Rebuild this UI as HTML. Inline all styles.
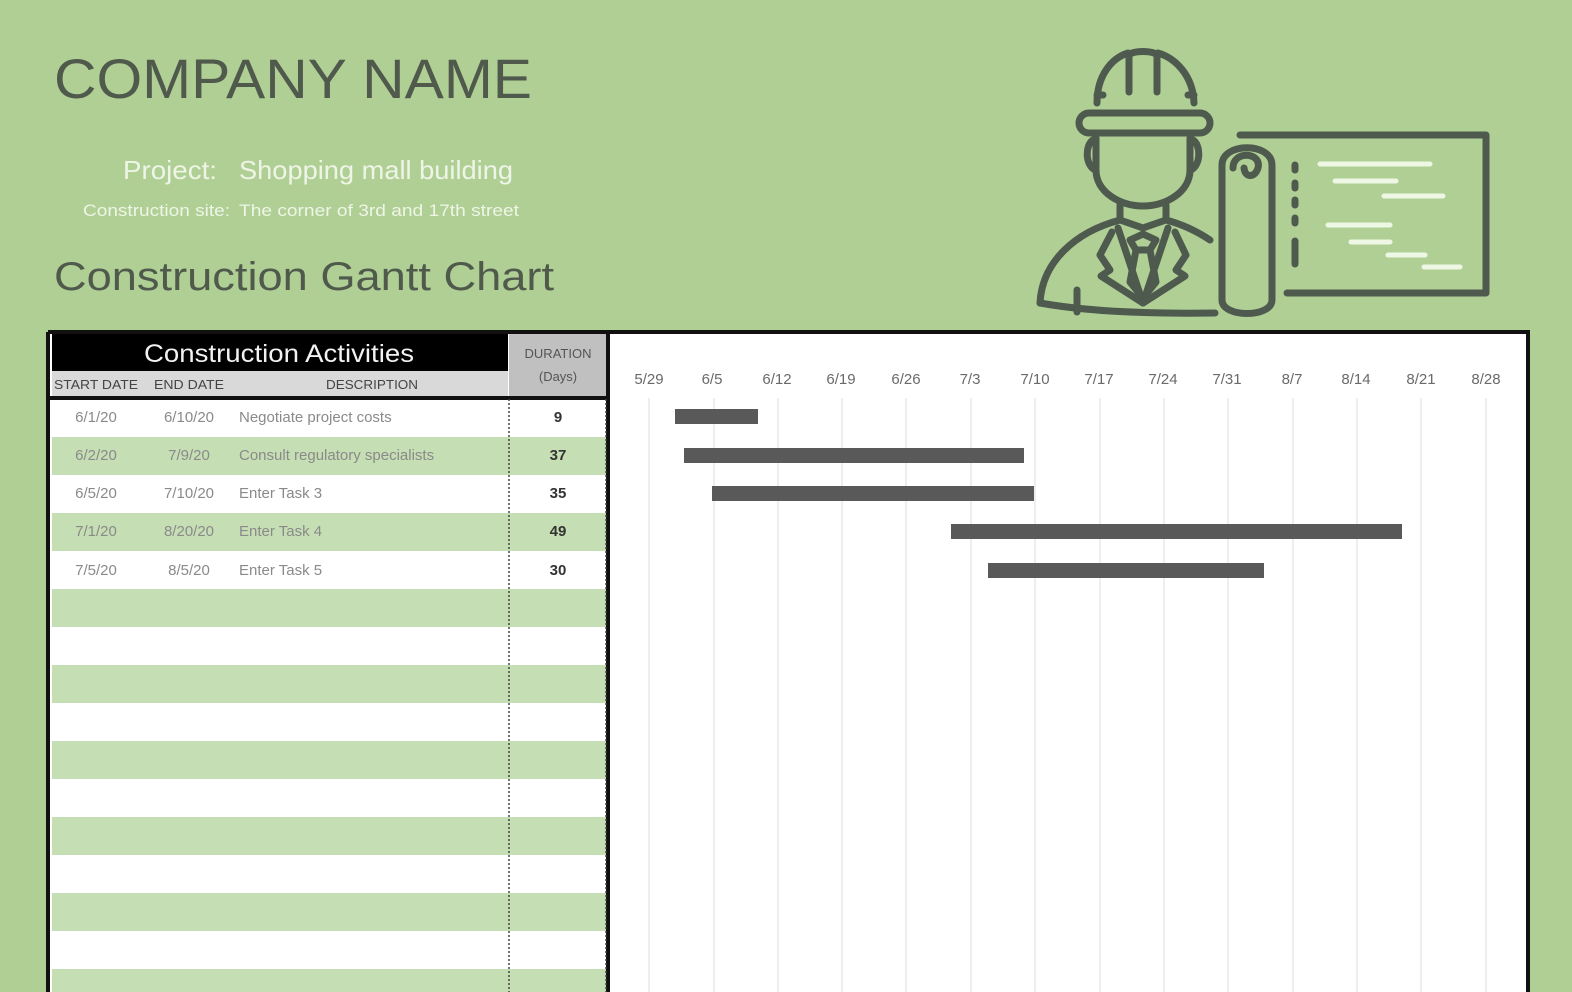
<!DOCTYPE html>
<html><head><meta charset="utf-8"><style>
html,body{margin:0;padding:0;background:#b0cf95;}
svg{display:block}
text{font-family:"Liberation Sans",sans-serif}
</style></head><body>
<svg width="1572" height="992" viewBox="0 0 1572 992" xmlns="http://www.w3.org/2000/svg">
<rect x="0" y="0" width="1572" height="992" fill="#b0cf95"/>
<text x="54" y="98" font-size="56" fill="#505a4c" textLength="478" lengthAdjust="spacingAndGlyphs">COMPANY NAME</text>
<text x="123" y="179" font-size="26" fill="#eef5e6" textLength="94" lengthAdjust="spacingAndGlyphs">Project:</text>
<text x="239" y="179" font-size="26" fill="#eef5e6" textLength="274" lengthAdjust="spacingAndGlyphs">Shopping mall building</text>
<text x="83" y="216" font-size="17" fill="#eef5e6" textLength="147" lengthAdjust="spacingAndGlyphs">Construction site:</text>
<text x="239" y="216" font-size="17" fill="#eef5e6" textLength="280" lengthAdjust="spacingAndGlyphs">The corner of 3rd and 17th street</text>
<text x="54" y="290" font-size="40" fill="#505a4c" textLength="500" lengthAdjust="spacingAndGlyphs">Construction Gantt Chart</text>

<g fill="none" stroke="#4f5a4f" stroke-width="7" stroke-linecap="round" stroke-linejoin="round">
<path d="M1097 103 C1097 75 1112 58 1128 53 M1158 53 C1175 58 1193 75 1194 103"/>
<path d="M1129 92 V56 C1129 50 1157 50 1157 56 V92"/>
<path d="M1097 95 H1103 M1188 95 H1194"/>
<rect x="1079" y="113" width="131" height="20" rx="10"/>
<path d="M1093 140 C1085 145 1085 165 1095 170 M1193 140 C1201 145 1201 165 1191 170"/>
<path d="M1096 138 V170 C1096 192 1120 206 1143 206 C1166 206 1190 192 1190 170 V138"/>
<path d="M1120 205 V220 M1166 205 V220"/>
<path d="M1040 303 C1042 262 1075 232 1120 220 L1143 228 L1166 220 C1185 225 1198 232 1210 240"/>
<path d="M1040 303 C1090 312 1150 314 1215 313"/>
<path d="M1118 228 L1143 303 L1168 228"/>
<path d="M1112 232 L1100 255 L1110 270 L1101 276 L1143 303 M1175 232 L1186 255 L1176 270 L1185 276 L1143 303"/>
<path d="M1130 240 L1143 234 L1156 240 L1150 250 H1136 Z M1136 250 L1130 282 L1143 298 L1156 282 L1150 250"/>
<path d="M1077 290 V312"/>
<path d="M1222 300 V165 C1222 142 1272 142 1272 165 V300 C1272 318 1222 318 1222 300 Z"/>
<path d="M1233 168 C1233 150 1262 152 1258 168 C1255 178 1245 178 1244 168"/>
<path d="M1240 135 H1486 V293 H1287"/>
<path d="M1295 165 V170 M1295 183 V188 M1295 200 V205 M1295 218 V223 M1295 241 V264"/>
</g>
<g stroke="#eef7e4" stroke-width="5" stroke-linecap="round">
<path d="M1320 164 H1430 M1335 181 H1396 M1384 196 H1443 M1328 225 H1390 M1351 242 H1390 M1388 255 H1425 M1424 267 H1460"/>
</g>

<rect x="609" y="332" width="920" height="670" fill="#ffffff"/>
<rect x="607" y="330" width="922" height="4" fill="#111"/>
<rect x="1526" y="330" width="4" height="670" fill="#111"/>
<g stroke="#e2e2e2" stroke-width="1.2">
<path d="M649 398V992M714 398V992M778 398V992M842 398V992M906 398V992M971 398V992M1035 398V992M1100 398V992M1164 398V992M1228 398V992M1293 398V992M1357 398V992M1421 398V992M1486 398V992"/>
</g>
<g font-size="15" fill="#6a6a6a" text-anchor="middle">
<text x="649" y="384">5/29</text><text x="712" y="384">6/5</text><text x="777" y="384">6/12</text>
<text x="841" y="384">6/19</text><text x="906" y="384">6/26</text><text x="970" y="384">7/3</text>
<text x="1035" y="384">7/10</text><text x="1099" y="384">7/17</text><text x="1163" y="384">7/24</text>
<text x="1227" y="384">7/31</text><text x="1292" y="384">8/7</text><text x="1356" y="384">8/14</text>
<text x="1421" y="384">8/21</text><text x="1486" y="384">8/28</text>
</g>
<g fill="#595959">
<rect x="675" y="409" width="83" height="15"/>
<rect x="684" y="448" width="340" height="15"/>
<rect x="712" y="486" width="322" height="15"/>
<rect x="951" y="524" width="451" height="15"/>
<rect x="988" y="563" width="276" height="15"/>
</g>

<rect x="48" y="332" width="560" height="670" fill="#fff"/>
<rect x="52" y="334" width="456" height="37" fill="#000"/>
<rect x="52" y="371" width="456" height="27" fill="#d9d9d9"/>
<rect x="509" y="334" width="97" height="64" fill="#c0c0c0"/>
<g fill="#c6deb3">
<rect x="52" y="437" width="554" height="38"/>
<rect x="52" y="513" width="554" height="38"/>
<rect x="52" y="589" width="554" height="38"/>
<rect x="52" y="665" width="554" height="38"/>
<rect x="52" y="741" width="554" height="38"/>
<rect x="52" y="817" width="554" height="38"/>
<rect x="52" y="893" width="554" height="38"/>
<rect x="52" y="969" width="554" height="38"/>
</g>
<path d="M48 332V992M608 332V992M48 332H608M48 398H608" stroke="#111" stroke-width="4" fill="none"/>
<path d="M509 399V992M606 399V992" stroke="#444" stroke-width="1.5" stroke-dasharray="2 2"/>
<text x="279" y="362" font-size="25" fill="#f2f2f2" text-anchor="middle" textLength="270" lengthAdjust="spacingAndGlyphs">Construction Activities</text>
<g font-size="13" fill="#444">
<text x="54" y="389" textLength="84" lengthAdjust="spacingAndGlyphs">START DATE</text>
<text x="154" y="389" textLength="70" lengthAdjust="spacingAndGlyphs">END DATE</text>
<text x="326" y="389" textLength="92" lengthAdjust="spacingAndGlyphs">DESCRIPTION</text>
</g>
<g font-size="13" fill="#555" text-anchor="middle">
<text x="558" y="358">DURATION</text>
<text x="558" y="381">(Days)</text>
</g>
<g font-size="15" fill="#8a8a8a">
<text x="96" y="422" text-anchor="middle">6/1/20</text><text x="189" y="422" text-anchor="middle">6/10/20</text><text x="239" y="422">Negotiate project costs</text>
<text x="96" y="460" text-anchor="middle">6/2/20</text><text x="189" y="460" text-anchor="middle">7/9/20</text><text x="239" y="460">Consult regulatory specialists</text>
<text x="96" y="498" text-anchor="middle">6/5/20</text><text x="189" y="498" text-anchor="middle">7/10/20</text><text x="239" y="498">Enter Task 3</text>
<text x="96" y="536" text-anchor="middle">7/1/20</text><text x="189" y="536" text-anchor="middle">8/20/20</text><text x="239" y="536">Enter Task 4</text>
<text x="96" y="575" text-anchor="middle">7/5/20</text><text x="189" y="575" text-anchor="middle">8/5/20</text><text x="239" y="575">Enter Task 5</text>
</g>
<g font-size="15" fill="#333" font-weight="bold" text-anchor="middle">
<text x="558" y="422">9</text><text x="558" y="460">37</text><text x="558" y="498">35</text><text x="558" y="536">49</text><text x="558" y="575">30</text>
</g>
</svg>
</body></html>
